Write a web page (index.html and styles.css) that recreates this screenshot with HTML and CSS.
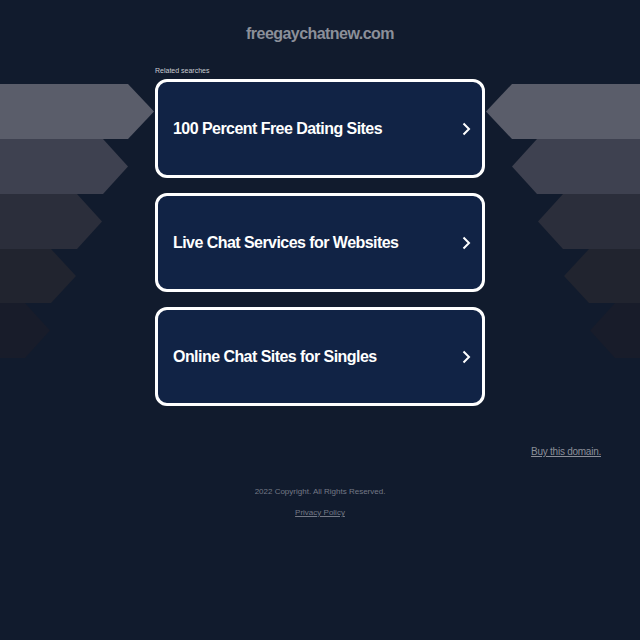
FILE: index.html
```html
<!DOCTYPE html>
<html>
<head>
<meta charset="utf-8">
<link rel="stylesheet" href="styles.css">
</head>
<body>
<div class="page">
  <svg class="deco" width="640" height="400" viewBox="0 0 640 400" aria-hidden="true">
    <polygon points="0,84 128,84 154,111.5 128,139 0,139" fill="#5a5d6a"/>
    <polygon points="0,139 103,139 128,166.5 103,194 0,194" fill="#3e4150"/>
    <polygon points="0,194 77,194 102,221.5 77,249 0,249" fill="#2b2e3b"/>
    <polygon points="0,249 51,249 76,276 51,303 0,303" fill="#21242f"/>
    <polygon points="0,303 25,303 50,330.5 25,358 0,358" fill="#181c2a"/>
    <polygon points="640,84 512,84 486,111.5 512,139 640,139" fill="#5a5d6a"/>
    <polygon points="640,139 537,139 512,166.5 537,194 640,194" fill="#3e4150"/>
    <polygon points="640,194 563,194 538,221.5 563,249 640,249" fill="#2b2e3b"/>
    <polygon points="640,249 589,249 564,276 589,303 640,303" fill="#21242f"/>
    <polygon points="640,303 615,303 590,330.5 615,358 640,358" fill="#181c2a"/>
  </svg>
  <header class="top">
    <h1 class="domain">freegaychatnew.com</h1>
  </header>
  <main class="main">
    <div class="related">Related searches</div>
    <div class="cards">
      <a class="card" href="#"><span class="label">100 Percent Free Dating Sites</span>
        <svg class="chev" width="10" height="16" viewBox="0 0 10 16"><path d="M2.5 2.5 L8 8 L2.5 13.5" fill="none" stroke="#fff" stroke-width="2"/></svg></a>
      <a class="card" href="#"><span class="label">Live Chat Services for Websites</span>
        <svg class="chev" width="10" height="16" viewBox="0 0 10 16"><path d="M2.5 2.5 L8 8 L2.5 13.5" fill="none" stroke="#fff" stroke-width="2"/></svg></a>
      <a class="card" href="#"><span class="label">Online Chat Sites for Singles</span>
        <svg class="chev" width="10" height="16" viewBox="0 0 10 16"><path d="M2.5 2.5 L8 8 L2.5 13.5" fill="none" stroke="#fff" stroke-width="2"/></svg></a>
    </div>
  </main>
  <div class="buy"><a href="#">Buy this domain.</a></div>
  <footer class="foot">
    <div class="copy">2022 Copyright. All Rights Reserved.</div>
    <a class="privacy" href="#">Privacy Policy</a>
  </footer>
</div>
</body>
</html>
```
FILE: styles.css
```css
html, body {
  margin: 0;
  padding: 0;
  background: #111b2d;
  font-family: "Liberation Sans", Arial, sans-serif;
}
.page {
  position: relative;
  width: 640px;
  height: 640px;
  overflow: hidden;
}
.deco {
  position: absolute;
  left: 0;
  top: 0;
}
.top {
  position: relative;
  padding-top: 24px;
  text-align: center;
}
.domain {
  margin: 0;
  font-size: 16px;
  line-height: 19px;
  font-weight: bold;
  color: #8b8f99;
  letter-spacing: -0.55px;
}
.main {
  position: relative;
  width: 330px;
  margin: 0 auto;
  padding-top: 23px;
}
.related {
  font-size: 7px;
  line-height: 9px;
  color: #c9ccd2;
  margin-bottom: 4px;
}
.cards {
  display: flex;
  flex-direction: column;
  gap: 15px;
}
.card {
  display: flex;
  align-items: center;
  justify-content: space-between;
  box-sizing: border-box;
  height: 99px;
  padding: 0 11px 0 15px;
  border: 3px solid #ffffff;
  border-radius: 12px;
  background: #112345;
  text-decoration: none;
}
.label {
  color: #ffffff;
  font-size: 16px;
  font-weight: bold;
  letter-spacing: -0.55px;
}
.chev {
  display: block;
}
.buy {
  position: relative;
  text-align: right;
  padding: 40px 39px 0 0;
  font-size: 10px;
  line-height: 12px;
  letter-spacing: -0.25px;
}
.buy a {
  color: #8b8f99;
}
.foot {
  position: relative;
  text-align: center;
  padding-top: 29px;
  font-size: 8px;
  line-height: 10px;
}
.copy {
  color: #747986;
}
.privacy {
  display: inline-block;
  margin-top: 11px;
  color: #747986;
}
```
